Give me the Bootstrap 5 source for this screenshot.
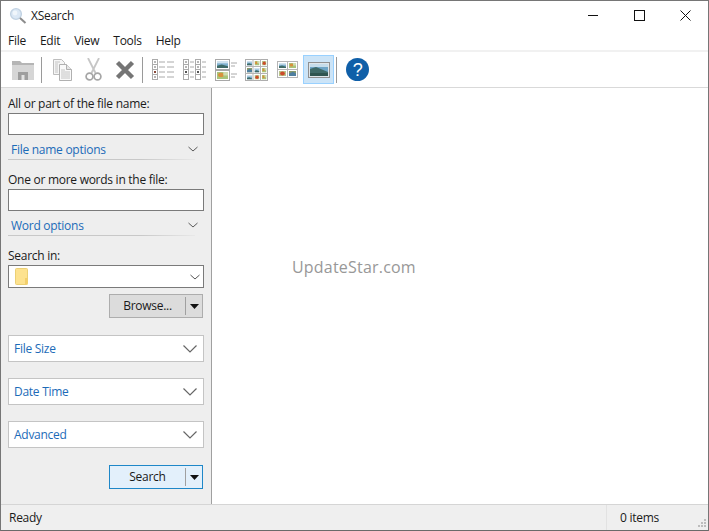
<!DOCTYPE html>
<html lang="en"><head><meta charset="utf-8"><title>XSearch</title>
<link href="https://cdn.jsdelivr.net/npm/bootstrap@5.3.0/dist/css/bootstrap.min.css" rel="stylesheet">
<style>
html,body{height:100%;margin:0;overflow:hidden}
body{font-family:"Open Sans","Noto Sans","Liberation Sans",sans-serif;font-size:12px;color:#1a1a1a;background:#fff;line-height:16px;letter-spacing:-.27px}
.win{width:709px;height:531px;border:1px solid #767676;border-bottom-color:#6a6a6a}
.ttl{height:29px;padding-left:8px}
.ttl-t{margin-left:4px}
.cap{width:46px;height:29px}
.mnu{height:20px;padding:2px 0 0 7px;gap:14px}
.tbr{height:38px;padding:0 0 0 7px;border-top:2px solid #f1f1f1;border-bottom:1px solid #d9d9d9}
.tb{width:31px;height:29px}
.tb-on{background:#cce4f7;border:1px solid #99d1ff}
.tsep{width:1px;height:26px;background:#9a9a9a;margin:0 5px 0 2px}
.pane{width:211px;background:#eeeeee;border-right:1px solid #a0a0a0;padding:0 7px}
.lbl{height:25px;padding-top:8px;white-space:nowrap}
.lbl-b{height:29px;padding-top:12px;white-space:nowrap}
.fld{height:22px;background:#fff;border:1px solid #7a7a7a}
.opt{height:24px;color:#1c6bb8;padding:7px 6px 0 3px}
.opt-ln{height:1px;width:187px;background:linear-gradient(90deg,#c8c8c8 70%,#e8e8e8)}
.cmb{height:23px;background:#fff;border:1px solid #7a7a7a;padding:0 3px 0 6px}
.spl{height:24px;width:94px;background:#dcdcdc;border:1px solid #adadad;margin-right:1px}
.spl-a{width:75px;text-align:center;line-height:22px}
.spl-s{width:1px;height:18px;background:#a0a0a0}
.spl-b{flex:1}
.spl-act{background:#e3f0fb;border:1px solid #1e87c8}
.brw{margin-top:6px}
.grp{height:27px;background:#fff;border:1px solid #c4c4c4;padding:0 6px 0 5px;color:#1c6bb8;width:196px}
.g17{height:17px}
.g16{height:16px}
.stat{height:26px;background:#efefef;border-top:1px solid #d5d5d5}
.st-a{padding-left:8px}
.st-b{width:102px;padding-left:13px;border-left:1px solid #e2e2e2;height:25px;line-height:25px;position:relative}
.wm{color:#989898;font-size:16px;letter-spacing:.2px;position:absolute;left:80px;top:168px;line-height:22px}
.main-a{height:416px}
.grip{position:absolute;right:1px;bottom:2px}
</style></head><body>
<svg width="0" height="0" class="position-absolute"><defs>
 <symbol id="lnd" viewBox="0 0 7 6" preserveAspectRatio="none"><rect width="7" height="6" fill="#7fb0cf"/><rect width="7" height="2" fill="#cfe2ee"/><path d="M0 4l3-1 4 1.500V6H0z" fill="#3e6a66"/></symbol>
 <symbol id="flw" viewBox="0 0 7 6" preserveAspectRatio="none"><rect width="7" height="6" fill="#a9c47a"/><circle cx="2.500" cy="2.500" r="1.800" fill="#d8903c"/><path d="M4 0h3v3H4z" fill="#cfdcb0"/></symbol>
 <symbol id="red" viewBox="0 0 7 6" preserveAspectRatio="none"><rect width="7" height="6" fill="#b9c48a"/><circle cx="3.500" cy="3" r="2.400" fill="#cc4b2a"/></symbol>
 <symbol id="mtn" viewBox="0 0 7 6" preserveAspectRatio="none"><rect width="7" height="6" fill="#8a9a6a"/><path d="M0 3l4-2 3 2v3H0z" fill="#4f7fa0"/></symbol>
</defs></svg>
<div class="win d-flex flex-column">
 <div class="ttl d-flex align-items-center">
  <svg width="18" height="18" viewBox="0 0 18 18"><circle cx="7" cy="7" r="5.400" fill="#dbe8f5" stroke="#c2d3e3" stroke-width="1.400"/><circle cx="6" cy="6" r="2.400" fill="#f0f6fb"/><path d="M11 11l5.500 5" stroke="#8c8c8c" stroke-width="2"/></svg>
  <span class="ttl-t flex-grow-1">XSearch</span>
  <div class="cap d-flex align-items-center justify-content-center"><svg width="11" height="11"><path d="M0 5.500h10" stroke="#111"/></svg></div>
  <div class="cap d-flex align-items-center justify-content-center"><svg width="11" height="11"><rect x=".5" y=".5" width="10" height="10" fill="none" stroke="#111"/></svg></div>
  <div class="cap d-flex align-items-center justify-content-center"><svg width="11" height="11"><path d="M.5.5l10 10M10.500.5l-10 10" stroke="#111"/></svg></div>
 </div>
 <div class="mnu d-flex align-items-center"><span>File</span><span>Edit</span><span>View</span><span>Tools</span><span>Help</span></div>
 <div class="tbr d-flex align-items-center">
  <div class="tb d-flex align-items-center justify-content-center"><svg width="23" height="20" viewBox="0 0 23 20"><path d="M0 1h8l2 2h12v3H0z" fill="#b5b5b5"/><rect y="5" width="22" height="15" fill="#d6d6d6"/><rect x="6" y="12" width="10" height="8" fill="#9e9e9e"/><rect x="9.500" y="15" width="3" height="5" fill="#e2e2e2"/></svg></div>
  <div class="tsep"></div>
  <div class="tb d-flex align-items-center justify-content-center"><svg width="19" height="22" viewBox="0 0 19 22"><path d="M.5.5h8l3 3v12H.5z" fill="#f5f5f5" stroke="#bdbdbd"/><path d="M6.500 5.500h7l5 5v11h-12z" fill="#f9f9f9" stroke="#b0b0b0"/><path d="M13.500 5.500v5h5" fill="#e5e5e5" stroke="#b0b0b0"/><path d="M8 11h4M8 13h9M8 15h9M8 17h9M8 19h9M2 3h5M2 5h3M2 7h3M2 9h3M2 11h3M2 13h3" stroke="#c4c4c4"/></svg></div>
  <div class="tb d-flex align-items-center justify-content-center"><svg width="17" height="23" viewBox="0 0 17 23"><path d="M3 0l7.500 15M14 0L6.500 15" stroke="#c6c6c6" stroke-width="1.800"/><circle cx="4.500" cy="18.500" r="3.400" fill="none" stroke="#a6a6a6" stroke-width="1.700"/><circle cx="12.500" cy="18.500" r="3.400" fill="none" stroke="#a6a6a6" stroke-width="1.700"/></svg></div>
  <div class="tb d-flex align-items-center justify-content-center"><svg width="20" height="20" viewBox="0 0 20 20"><path d="M2.500 2.500l15 15M17.500 2.500l-15 15" stroke="#757575" stroke-width="4.400"/></svg></div>
  <div class="tsep"></div>
  <div class="tb d-flex align-items-center justify-content-center"><svg width="23" height="21" viewBox="0 0 23 21"><g fill="#fff" stroke="#ababab"><rect x=".5" y=".5" width="5" height="5"/><rect x=".5" y="5.500" width="5" height="5"/><rect x=".5" y="10.500" width="5" height="5"/><rect x=".5" y="15.500" width="5" height="5"/></g><path d="M7 3h6M15 3h7M7 8h6M15 8h7M7 13h6M15 13h7M7 18h6M15 18h7" stroke="#aaa"/><path d="M2 2h2v2H2zM2 7h2v2H2zM2 17h2v2H2z" fill="#b5b5b5"/><path d="M2 12h2v2H2z" fill="#8a4a3a"/></svg></div>
  <div class="tb d-flex align-items-center justify-content-center"><svg width="23" height="21" viewBox="0 0 23 21"><g fill="#fff" stroke="#ababab"><rect x=".5" y=".5" width="5" height="5"/><rect x=".5" y="5.500" width="5" height="5"/><rect x=".5" y="10.500" width="5" height="5"/><rect x=".5" y="15.500" width="5" height="5"/><rect x="12.500" y=".5" width="5" height="5"/><rect x="12.500" y="5.500" width="5" height="5"/><rect x="12.500" y="10.500" width="5" height="5"/><rect x="12.500" y="15.500" width="5" height="5"/></g><path d="M7 3h4M7 8h4M7 13h4M7 18h4M19 3h4M19 8h4M19 13h4M19 18h4" stroke="#aaa"/><path d="M2 2h2v2H2zM2 7h2v2H2zM14 2h2v2h-2zM14 7h2v2h-2z" fill="#b5b5b5"/><path d="M2 12h2v2H2zM14 12h2v2h-2z" fill="#555"/></svg></div>
  <div class="tb d-flex align-items-center justify-content-center"><svg width="22" height="22" viewBox="0 0 22 22"><g fill="#fff" stroke="#a8a8a8"><rect x=".5" y=".5" width="14" height="10"/><rect x=".5" y="11.500" width="14" height="10"/></g><use href="#lnd" x="2" y="2" width="11" height="7"/><use href="#flw" x="2" y="13" width="11" height="7"/><path d="M16 4h6M16 7h4M16 15h6M16 18h4" stroke="#aaa"/></svg></div>
  <div class="tb d-flex align-items-center justify-content-center"><svg width="23" height="22" viewBox="0 0 23 22"><rect x=".5" y=".5" width="22" height="21" fill="#fff" stroke="#adadad"/><path d="M8 0v22M15.500 0v22M0 7.500h23M0 14.500h23" stroke="#b5b5b5"/><use href="#lnd" x="2" y="2" width="5" height="4.500"/><use href="#flw" x="9.500" y="2" width="5" height="4.500"/><use href="#red" x="17" y="2" width="4.500" height="4.500"/><use href="#mtn" x="2" y="9" width="5" height="4.500"/><use href="#lnd" x="9.500" y="9" width="5" height="4.500"/><use href="#flw" x="17" y="9" width="4.500" height="4.500"/><use href="#lnd" x="2" y="16" width="5" height="4.500"/><use href="#red" x="9.500" y="16" width="5" height="4.500"/><use href="#flw" x="17" y="16" width="4.500" height="4.500"/></svg></div>
  <div class="tb d-flex align-items-center justify-content-center"><svg width="21" height="17" viewBox="0 0 21 17"><rect x=".5" y=".5" width="20" height="16" fill="#fff" stroke="#b5b5b5"/><path d="M10.500 0v17M0 8.500h21" stroke="#b5b5b5"/><use href="#lnd" x="2" y="2" width="7" height="5"/><use href="#flw" x="12" y="2" width="7" height="5"/><use href="#red" x="2" y="10" width="7" height="5"/><use href="#mtn" x="12" y="10" width="7" height="5"/></svg></div>
  <div class="tb tb-on d-flex align-items-center justify-content-center"><svg width="22" height="16" viewBox="0 0 22 16"><rect x=".5" y=".5" width="21" height="15" fill="#dfe6ea" stroke="#8f8f8f"/><rect x="2" y="2" width="18" height="12" fill="#6fa5c6"/><path d="M2 2h18v3H2z" fill="#c5dcea"/><path d="M2 7l6-2 12 5v4H2z" fill="#3f6a68"/><path d="M2 11h18v3H2z" fill="#2f5550"/></svg></div>
  <div class="tsep"></div>
  <div class="tb d-flex align-items-center justify-content-center"><svg width="23" height="23" viewBox="0 0 23 23"><circle cx="11.500" cy="11.500" r="11.500" fill="#0f5fa8"/><text x="11.500" y="18" text-anchor="middle" font-family="Liberation Sans" font-size="18" fill="#fff">?</text></svg></div>
 </div>
 <div class="d-flex main-a">
  <div class="pane flex-shrink-0">
   <div class="lbl">All or part of the file name:</div>
   <div class="fld"></div>
   <div class="opt d-flex justify-content-between"><span>File name options</span><svg width="10" height="14" viewBox="0 0 10 14"><path d="M.5 5l4.500 4 4.500-4" fill="none" stroke="#5a5a5a"/></svg></div>
   <div class="opt-ln"></div>
   <div class="lbl-b">One or more words in the file:</div>
   <div class="fld"></div>
   <div class="opt d-flex justify-content-between"><span>Word options</span><svg width="10" height="14" viewBox="0 0 10 14"><path d="M.5 5l4.500 4 4.500-4" fill="none" stroke="#5a5a5a"/></svg></div>
   <div class="opt-ln"></div>
   <div class="lbl-b">Search in:</div>
   <div class="cmb d-flex align-items-center justify-content-between"><svg width="13" height="17" viewBox="0 0 13 17"><rect x=".5" y=".5" width="12" height="16" rx="1" fill="#fde28f" stroke="#ecd075"/><rect x="10" y="10" width="2.500" height="6.500" fill="#f3cf6a"/></svg><svg width="10" height="8" viewBox="0 0 10 8"><path d="M.5 2l4.500 4 4.500-4" fill="none" stroke="#555"/></svg></div>
   <div class="brw d-flex justify-content-end">
    <div class="spl d-flex align-items-center"><span class="spl-a">Browse...</span><span class="spl-s"></span><span class="spl-b d-flex justify-content-center"><svg width="9" height="5"><path d="M0 0h9L4.500 5z" fill="#111"/></svg></span></div>
   </div>
   <div class="g17"></div>
   <div class="grp d-flex align-items-center justify-content-between"><span>File Size</span><svg width="14" height="8" viewBox="0 0 14 8"><path d="M.5.5L7 7l6.500-6.500" fill="none" stroke="#666" stroke-width="1.200"/></svg></div>
   <div class="g16"></div>
   <div class="grp d-flex align-items-center justify-content-between"><span>Date Time</span><svg width="14" height="8" viewBox="0 0 14 8"><path d="M.5.5L7 7l6.500-6.500" fill="none" stroke="#666" stroke-width="1.200"/></svg></div>
   <div class="g16"></div>
   <div class="grp d-flex align-items-center justify-content-between"><span>Advanced</span><svg width="14" height="8" viewBox="0 0 14 8"><path d="M.5.5L7 7l6.500-6.500" fill="none" stroke="#666" stroke-width="1.200"/></svg></div>
   <div class="g17"></div>
   <div class="d-flex justify-content-end">
    <div class="spl spl-act d-flex align-items-center"><span class="spl-a">Search</span><span class="spl-s"></span><span class="spl-b d-flex justify-content-center"><svg width="9" height="5"><path d="M0 0h9L4.500 5z" fill="#111"/></svg></span></div>
   </div>
  </div>
  <div class="flex-grow-1 position-relative"><span class="wm">UpdateStar.com</span></div>
 </div>
 <div class="stat d-flex align-items-center">
  <span class="st-a flex-grow-1">Ready</span>
  <span class="st-b">0 items
   <svg class="grip" width="10" height="10"><path d="M7 1h2v2H7zM4 4h2v2H4zM7 4h2v2H7zM1 7h2v2H1zM4 7h2v2H4zM7 7h2v2H7z" fill="#bdbdbd"/></svg></span>
 </div>
</div>
</body></html>
